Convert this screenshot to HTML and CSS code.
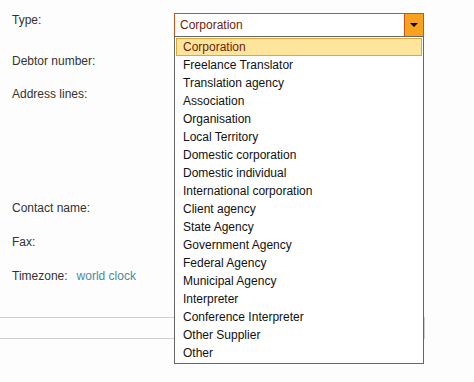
FILE: index.html
```html
<!DOCTYPE html>
<html lang="en">
<head>
    <meta charset="UTF-8">
    <title>Client</title>
    <link rel="stylesheet" href="styles.css">
</head>
<body>
    <div class="form">
        <div class="row row-type">
            <label class="label">Type:</label>
            <div class="select">
                <div class="select-value">Corporation</div>
                <div class="select-arrow"></div>
                <ul class="options">
                    <li class="selected">Corporation</li>
                    <li>Freelance Translator</li>
                    <li>Translation agency</li>
                    <li>Association</li>
                    <li>Organisation</li>
                    <li>Local Territory</li>
                    <li>Domestic corporation</li>
                    <li>Domestic individual</li>
                    <li>International corporation</li>
                    <li>Client agency</li>
                    <li>State Agency</li>
                    <li>Government Agency</li>
                    <li>Federal Agency</li>
                    <li>Municipal Agency</li>
                    <li>Interpreter</li>
                    <li>Conference Interpreter</li>
                    <li>Other Supplier</li>
                    <li>Other</li>
                </ul>
            </div>
        </div>
        <div class="row row-debtor">
            <label class="label">Debtor number:</label>
        </div>
        <div class="row row-address">
            <label class="label">Address lines:</label>
        </div>
        <div class="row row-contact">
            <label class="label">Contact name:</label>
        </div>
        <div class="row row-fax">
            <label class="label">Fax:</label>
        </div>
        <div class="row row-tz">
            <label class="label label-short">Timezone:</label>
            <a class="link" href="#">world clock</a>
        </div>
        <div class="bar"></div>
    </div>
</body>
</html>
```

FILE: styles.css
```css
* {
    margin: 0;
    padding: 0;
    box-sizing: border-box;
}
html, body {
    min-height: 100vh;
}
body {
    font-family: "Liberation Sans", Arial, sans-serif;
    font-size: 12px;
    color: #333;
    background-color: #fdfdfd;
}
.form {
    padding-top: 12px;
}
.row {
    display: flex;
    align-items: flex-start;
    padding-left: 12px;
}
.label {
    width: 162px;
    line-height: 14px;
    padding-top: 1px;
}
.label-short {
    width: auto;
    margin-right: 9px;
}
.row-type {
    height: 41px;
}
.row-debtor {
    height: 33px;
}
.row-address {
    height: 114px;
}
.row-contact {
    height: 34px;
}
.row-fax {
    height: 34px;
}
.row-tz {
    height: 49px;
}
.link {
    color: #4a8a9c;
    text-decoration: none;
    line-height: 14px;
    padding-top: 1px;
}
.select {
    position: relative;
    margin-top: 1px;
    width: 250px;
    height: 24px;
    display: flex;
    border: 1px solid #cc5218;
    background: #fff;
}
.select-value {
    flex: 1;
    line-height: 22px;
    padding-left: 5px;
    color: #6e1e0c;
}
.select-arrow {
    width: 19px;
    background: #f8a21f;
    border-left: 1px solid #cc5218;
    display: flex;
    align-items: center;
    justify-content: center;
}
.select-arrow::after {
    content: "";
    border-left: 4px solid transparent;
    border-right: 4px solid transparent;
    border-top: 4px solid #000;
}
.options {
    position: absolute;
    left: -1px;
    top: 22px;
    width: 250px;
    list-style: none;
    background: #fff;
    border: 1px solid #666;
    padding: 1px;
    color: #111;
    z-index: 2;
}
.options li {
    height: 18px;
    line-height: 16px;
    padding-left: 6px;
    border: 1px solid transparent;
}
.options .selected {
    background: #fde59c;
    border-color: #e0a53c;
    color: #6e1e0c;
}
.bar {
    width: 425px;
    height: 22px;
    border-top: 1px solid #cfcfcf;
    border-bottom: 1px solid #cfcfcf;
    border-right: 1px solid #cfcfcf;
}
```
